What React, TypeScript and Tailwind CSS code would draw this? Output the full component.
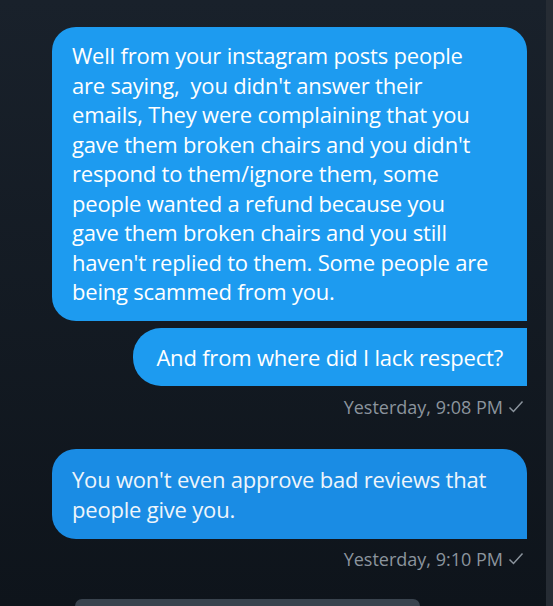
import React from "react";

const font = { fontFamily: '"Open Sans", "Noto Sans", sans-serif' };

const Stamp = ({ time }: { time: string }) => {
  return (
    <div className="flex justify-end items-center gap-[5px] pr-[3px] text-[18px] text-[#8b949d] leading-[24px]">
      <span>Yesterday, {time}</span>
      <svg width="16" height="16" viewBox="0 0 16 16" className="mb-[1px]">
        <path d="M1.5 8.5 L5.5 12.5 L14.5 2.5" fill="none" stroke="#8b949d" strokeWidth="1.5" />
      </svg>
    </div>
  );
};

const Lines = ({ lines }: { lines: string[] }) => {
  return (
    <>
      {lines.map((l, i) => (
        <div key={i} className="whitespace-pre">
          {l}
        </div>
      ))}
    </>
  );
};

const App = () => {
  return (
    <div
      className="w-full h-[606px] flex overflow-hidden bg-gradient-to-b from-[#19212b] to-[#0e141b]"
      style={font}
    >
      <main className="flex-1 flex flex-col pt-[27px] pl-[52px] pr-[19px]">
        <div className="bg-[#1d9bf0] text-white text-[22px] leading-[29.5px] tracking-[-0.2px] rounded-[24px] rounded-br-none pl-[20px] pr-[14px] pt-[14px] pb-[14px]">
          <Lines
            lines={[
              "Well from your instagram posts people",
              "are saying,  you didn't answer their",
              "emails, They were complaining that you",
              "gave them broken chairs and you didn't",
              "respond to them/ignore them, some",
              "people wanted a refund because you",
              "gave them broken chairs and you still",
              "haven't replied to them. Some people are",
              "being scammed from you.",
            ]}
          />
        </div>
        <div className="self-end mt-[7px] bg-[#1d9bf0] text-white text-[22px] leading-[29.5px] tracking-[-0.2px] rounded-l-[28px] pl-[23px] pr-[24px] pt-[15px] pb-[14px]">
          And from where did I lack respect?
        </div>
        <div className="mt-[9px]">
          <Stamp time="9:08 PM" />
        </div>
        <div className="mt-[30px] bg-[#1a8ce4] text-[#eef5fb] text-[22px] leading-[29.5px] tracking-[-0.2px] rounded-[24px] rounded-br-none pl-[20px] pr-[14px] pt-[16px] pb-[15px]">
          <Lines lines={["You won't even approve bad reviews that", "people give you."]} />
        </div>
        <div className="mt-[8px]">
          <Stamp time="9:10 PM" />
        </div>
        <div className="mt-[28px] ml-[23px] w-[345px] h-[30px] bg-[#39434e] rounded-t-[22px]"></div>
      </main>
      <div className="w-[7px] bg-[#262c34]"></div>
    </div>
  );
};

export default App;
